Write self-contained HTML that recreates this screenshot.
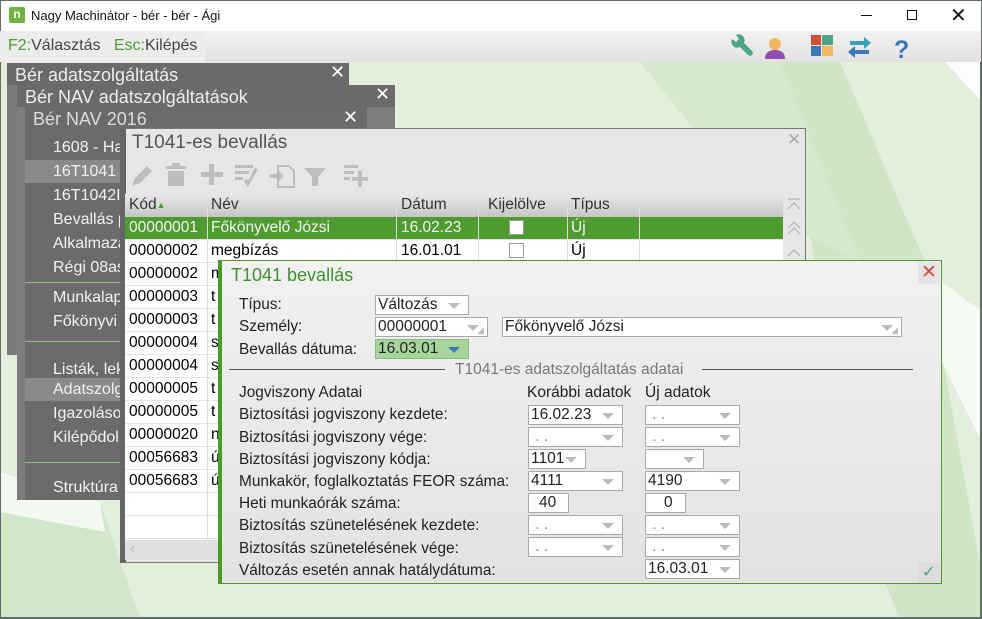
<!DOCTYPE html>
<html><head><meta charset="utf-8">
<style>
*{margin:0;padding:0;box-sizing:border-box}
body{width:982px;height:619px;overflow:hidden;font-family:"Liberation Sans",sans-serif;background:#e3efdc;position:relative}
.abs{position:absolute}
.t{position:absolute;white-space:nowrap}
.menu .t{color:#f2f2f2;font-size:16px;left:28px}
.inp{position:absolute;background:#fff;border:1px solid #a9a9a9;height:20px;font-size:15.5px;line-height:18px;padding-left:2px;color:#222}
.dd::after{content:"";position:absolute;right:8px;top:7px;border-left:6px solid transparent;border-right:6px solid transparent;border-top:6px solid #bbb}
.row{position:absolute;left:125px;width:658px;height:23px;border-bottom:1px solid #e3e3e3;font-size:15.5px;line-height:22px;background:#fff}
.row span{position:absolute;top:0}
.lab{position:absolute;left:239px;font-size:15.4px;color:#222}
</style></head><body>
<svg class="abs" style="left:0;top:62px" width="982" height="557">
<polygon points="700,0 840,0 925,200 990,557 900,557 860,460 780,0" fill="#cfe5c6"/>
<polygon points="640,0 700,0 780,0 860,200 760,150" fill="#d6e9ce"/>
<polygon points="945,0 982,0 982,40" fill="#fafdf9"/>
<polygon points="942,220 982,250 982,380 942,300" fill="#f7fbf5"/>
<polygon points="0,420 100,440 140,557 0,557" fill="#d2e7ca"/>
<polygon points="0,410 100,440 105,470 0,450" fill="#f3f9f0"/>
</svg>
<!-- title bar -->
<div class="abs" style="left:0;top:0;width:982px;height:31px;background:#fff;border:1px solid #5f6e6a;border-bottom:none"></div>
<div class="abs" style="left:9px;top:7px;width:16px;height:16px;background:#6db33f;border-radius:2px;color:#fff;font-size:12px;font-weight:bold;line-height:15px;text-align:center">n</div>
<div class="t" style="left:31px;top:8px;font-size:13px;color:#111">Nagy Machinátor - bér - bér - Ági</div>
<div class="abs" style="left:861px;top:15px;width:11px;height:1px;background:#111"></div>
<div class="abs" style="left:907px;top:10px;width:10px;height:10px;border:1px solid #111"></div>
<div class="t" style="left:950px;top:3px;font-size:20px;color:#111">✕</div>
<!-- toolbar -->
<div class="abs" style="left:0;top:31px;width:982px;height:31px;background:linear-gradient(#f2f2f2,#e2e2e2);border-left:1px solid #5f6e6a;border-right:1px solid #5f6e6a"></div>
<div class="abs" style="left:0;top:31px;width:205px;height:31px;background:#ececec"></div>
<div class="t" style="left:8px;top:37px;font-size:16px;color:#444"><span style="color:#4aa02c">F2:</span>Választás&nbsp;&nbsp; <span style="color:#4aa02c">Esc:</span>Kilépés</div>
<svg class="abs" style="left:722px;top:31px" width="202" height="31">
<path d="M10 8 a6 6 0 0 0 8 8 l8 8 a2.5 2.5 0 0 0 4 -4 l-8 -8 a6 6 0 0 0 -8 -8 l3 4 -3 3z" fill="#4ea585"/>
<circle cx="53" cy="13" r="6" fill="#f0b860"/><path d="M43 28 q0 -9 10 -9 q10 0 10 9z" fill="#8e4fae"/>
<rect x="89" y="4" width="10" height="10" fill="#d24e34"/><rect x="100" y="4" width="11" height="10" fill="#4ea585"/>
<rect x="89" y="15" width="10" height="10" fill="#3b78b8"/><rect x="100" y="15" width="11" height="10" fill="#f0b860"/>
<path d="M128 10 h14 v-4 l7 6 -7 6 v-4 h-14z" fill="#3aa0b8"/><path d="M147 19 h-14 v-4 l-7 6 7 6 v-4 h14z" fill="#3b78b8"/>
<text x="172" y="27" font-family="Liberation Sans" font-weight="bold" font-size="25" fill="#3b78b8">?</text>
</svg>
<!-- borders -->
<div class="abs" style="left:980px;top:62px;width:2px;height:557px;background:#5f6e6a"></div>
<div class="abs" style="left:0;top:62px;width:1px;height:557px;background:#5f6e6a"></div>
<div class="abs" style="left:0;top:617px;width:982px;height:2px;background:#5f6e6a"></div>
<!-- back windows -->
<div class="abs" style="left:7px;top:63px;width:342px;height:292px;background:#7a7a7a"></div>
<div class="abs" style="left:7px;top:63px;width:342px;height:22px;background:#6a6a6a"></div>
<div class="t" style="left:15px;top:65px;font-size:18px;color:#eee">Bér adatszolgáltatás</div>
<div class="t" style="left:330px;top:62px;font-size:18px;color:#fff">✕</div>
<div class="abs" style="left:17px;top:85px;width:378px;height:415px;background:#7d7d7d"></div>
<div class="abs" style="left:17px;top:85px;width:378px;height:22px;background:#6a6a6a"></div>
<div class="t" style="left:25px;top:87px;font-size:18px;color:#eee">Bér NAV adatszolgáltatások</div>
<div class="t" style="left:375px;top:84px;font-size:18px;color:#fff">✕</div>
<div class="abs menu" style="left:25px;top:107px;width:342px;height:393px;background:#6b6b6b">
<div class="t" style="left:8px;top:2px;font-size:18px;color:#ddd">Bér NAV 2016</div>
<div class="t" style="left:318px;top:0;font-size:18px;color:#fff">✕</div>
<div class="abs" style="left:0;top:53px;width:342px;height:23px;background:#8a8a8a"></div>
<div class="abs" style="left:0;top:271px;width:342px;height:23px;background:#8a8a8a"></div>
<div class="abs" style="left:0;top:175px;width:342px;height:1px;background:#8fbf7a"></div>
<div class="abs" style="left:0;top:234px;width:342px;height:1px;background:#8fbf7a"></div>
<div class="abs" style="left:0;top:355px;width:342px;height:1px;background:#8fbf7a"></div>
<div class="t" style="top:32px">1608 - Ha</div>
<div class="t" style="top:56px">16T1041</div>
<div class="t" style="top:80px">16T1042I</div>
<div class="t" style="top:104px">Bevallás p</div>
<div class="t" style="top:128px">Alkalmaza</div>
<div class="t" style="top:152px">Régi 08as</div>
<div class="t" style="top:182px">Munkalap</div>
<div class="t" style="top:206px">Főkönyvi</div>
<div class="t" style="top:254px">Listák, lek</div>
<div class="t" style="top:274px">Adatszolg</div>
<div class="t" style="top:298px">Igazoláso</div>
<div class="t" style="top:322px">Kilépődol</div>
<div class="t" style="top:372px">Struktúra</div>
</div>
<!-- T1041-es window -->
<div class="abs" style="left:120px;top:128px;width:686px;height:435px;background:#e6e6e6;border:1px solid #777;border-left:6px solid #666"></div>
<div class="t" style="left:132px;top:132px;font-size:19px;color:#555">T1041-es bevallás</div>
<div class="t" style="left:787px;top:130px;font-size:17px;color:#aaa">✕</div>
<svg class="abs" style="left:128px;top:160px" width="250" height="30" fill="#bdbdbd">
<path d="M4 26 l3 -8 12 -12 5 5 -12 12z"/>
<rect x="38" y="6" width="20" height="3"/><rect x="44" y="3" width="8" height="3"/><path d="M40 11 h16 v15 h-16z"/>
<rect x="73" y="12" width="22" height="5"/><rect x="81" y="4" width="5" height="21"/>
<rect x="107" y="5" width="18" height="3"/><rect x="107" y="11" width="14" height="3"/><rect x="107" y="17" width="8" height="3"/><path d="M116 22 l4 5 10 -18 -3 -1 -7 13 -2 -3z"/>
<path d="M150 6 h11 l5 5 v16 h-16z" fill="none" stroke="#bdbdbd" stroke-width="2"/><path d="M142 14 h8 v-4 l6 6 -6 6 v-4 h-8z"/>
<path d="M176 8 h22 l-8 9 v9 h-6 v-9z"/>
<rect x="216" y="5" width="14" height="3"/><rect x="216" y="11" width="10" height="3"/><rect x="216" y="17" width="6" height="3"/><rect x="224" y="17" width="16" height="4"/><rect x="230" y="11" width="4" height="16"/>
</svg>
<!-- table -->
<div class="abs" style="left:125px;top:194px;width:658px;height:23px;background:linear-gradient(#e8e8e8,#c6c6c6);font-size:15.5px;color:#333;line-height:22px">
<span class="t" style="left:4px">Kód<span style="color:#4aa02c;font-size:9px;vertical-align:top">▲</span></span>
<span class="t" style="left:86px">Név</span><span class="t" style="left:276px">Dátum</span><span class="t" style="left:363px">Kijelölve</span><span class="t" style="left:446px">Típus</span>
</div>
<div class="abs" style="left:125px;top:217px;width:658px;height:323px;background:#fff"></div>
<div class="row" style="top:217px;background:#4f9b2f;color:#f4f4f4"><span style="left:4px">00000001</span><span style="left:86px">Főkönyvelő Józsi</span><span style="left:276px">16.02.23</span><span style="left:446px">Új</span><span style="left:384px;top:3px;width:15px;height:15px;background:#fff;border:1px solid #999"></span></div>
<div class="row" style="top:240px"><span style="left:4px">00000002</span><span style="left:86px">megbízás</span><span style="left:276px">16.01.01</span><span style="left:446px">Új</span><span style="left:384px;top:3px;width:15px;height:15px;background:#fff;border:1px solid #999"></span></div>
<div class="row" style="top:263px"><span style="left:4px">00000002</span><span style="left:86px">m</span></div>
<div class="row" style="top:286px"><span style="left:4px">00000003</span><span style="left:86px">t</span></div>
<div class="row" style="top:309px"><span style="left:4px">00000003</span><span style="left:86px">t</span></div>
<div class="row" style="top:332px"><span style="left:4px">00000004</span><span style="left:86px">s</span></div>
<div class="row" style="top:355px"><span style="left:4px">00000004</span><span style="left:86px">s</span></div>
<div class="row" style="top:378px"><span style="left:4px">00000005</span><span style="left:86px">t</span></div>
<div class="row" style="top:401px"><span style="left:4px">00000005</span><span style="left:86px">t</span></div>
<div class="row" style="top:424px"><span style="left:4px">00000020</span><span style="left:86px">n</span></div>
<div class="row" style="top:447px"><span style="left:4px">00056683</span><span style="left:86px">ú</span></div>
<div class="row" style="top:470px"><span style="left:4px">00056683</span><span style="left:86px">ú</span></div>
<div class="row" style="top:493px"></div>
<div class="row" style="top:516px"></div>
<div class="abs" style="left:207px;top:194px;width:1px;height:346px;background:#ddd"></div>
<div class="abs" style="left:396px;top:194px;width:1px;height:70px;background:#ddd"></div>
<div class="abs" style="left:478px;top:194px;width:1px;height:70px;background:#ddd"></div>
<div class="abs" style="left:567px;top:194px;width:1px;height:70px;background:#ddd"></div>
<div class="abs" style="left:639px;top:194px;width:1px;height:70px;background:#ddd"></div>
<div class="abs" style="left:125px;top:540px;width:658px;height:20px;background:#e0e0e0"></div>
<div class="t" style="left:130px;top:540px;font-size:16px;color:#bbb">‹</div>
<svg class="abs" style="left:785px;top:196px" width="20" height="66" fill="none" stroke="#bbb" stroke-width="1.5">
<path d="M3 3 h12 M3 13 l6 -6 6 6"/><path d="M3 32 l6 -6 6 6 M3 38 l6 -6 6 6"/><path d="M3 60 l6 -6 6 6"/>
</svg>
<!-- dialog -->
<div class="abs" style="left:218px;top:260px;width:724px;height:324px;background:linear-gradient(#f1f1f1,#e2e2e2);border:1px solid #4a9a2a;border-left:4px solid #4a9a2a"></div>
<div class="t" style="left:231px;top:265px;font-size:18px;color:#3f8f2a">T1041 bevallás</div>
<div class="abs" style="left:918px;top:262px;width:22px;height:22px;background:#e4e4e4"></div>
<div class="t" style="left:921px;top:261px;font-size:19px;color:#d24e34">✕</div>
<div class="abs" style="left:918px;top:562px;width:22px;height:21px;background:#dcdcdc"></div>
<div class="t" style="left:922px;top:562px;font-size:16px;color:#4ea585">✓</div>
<div class="lab" style="top:296px">Típus:</div>
<div class="lab" style="top:318px">Személy:</div>
<div class="lab" style="top:341px">Bevallás dátuma:</div>
<div class="inp dd" style="left:375px;top:295px;width:94px">Változás</div>
<div class="inp dd" style="left:375px;top:317px;width:113px">00000001<span style="position:absolute;right:3px;top:3px;font-size:9px;color:#bbb">◢</span></div>
<div class="inp dd" style="left:502px;top:317px;width:400px">Főkönyvelő Józsi<span style="position:absolute;right:3px;top:3px;font-size:9px;color:#bbb">◢</span></div>
<div class="inp" style="left:375px;top:339px;width:94px;background:#a6d49a;border-color:#8ab87f">16.03.01<span style="position:absolute;right:8px;top:7px;border-left:6px solid transparent;border-right:6px solid transparent;border-top:6px solid #3b78b8"></span></div>
<div class="abs" style="left:229px;top:369px;width:216px;height:1px;background:#555"></div>
<div class="t" style="left:455px;top:361px;font-size:15.5px;color:#777">T1041-es adatszolgáltatás adatai</div>
<div class="abs" style="left:702px;top:369px;width:211px;height:1px;background:#555"></div>
<div class="lab" style="top:384px">Jogviszony Adatai</div>
<div class="t" style="left:527px;top:384px;font-size:15.5px;color:#222">Korábbi adatok</div>
<div class="t" style="left:645px;top:384px;font-size:15.5px;color:#222">Új adatok</div>
<div class="lab" style="top:406px">Biztosítási jogviszony kezdete:</div>
<div class="lab" style="top:429px">Biztosítási jogviszony vége:</div>
<div class="lab" style="top:451px">Biztosítási jogviszony kódja:</div>
<div class="lab" style="top:473px">Munkakör, foglalkoztatás FEOR száma:</div>
<div class="lab" style="top:495px">Heti munkaórák száma:</div>
<div class="lab" style="top:517px">Biztosítás szünetelésének kezdete:</div>
<div class="lab" style="top:540px">Biztosítás szünetelésének vége:</div>
<div class="lab" style="top:562px">Változás esetén annak hatálydátuma:</div>
<div class="inp dd" style="left:528px;top:405px;width:95px">16.02.23</div>
<div class="inp dd" style="left:645px;top:405px;width:95px;color:#888">&nbsp;. .</div>
<div class="inp dd" style="left:528px;top:427px;width:95px;color:#888">&nbsp;. .</div>
<div class="inp dd" style="left:645px;top:427px;width:95px;color:#888">&nbsp;. .</div>
<div class="inp dd" style="left:528px;top:449px;width:58px">1101</div>
<div class="inp dd" style="left:645px;top:449px;width:59px"></div>
<div class="inp dd" style="left:528px;top:471px;width:95px">4111</div>
<div class="inp dd" style="left:645px;top:471px;width:95px">4190</div>
<div class="inp" style="left:528px;top:493px;width:41px;padding-left:10px">40</div>
<div class="inp" style="left:645px;top:493px;width:41px;padding-left:18px">0</div>
<div class="inp dd" style="left:528px;top:515px;width:95px;color:#888">&nbsp;. .</div>
<div class="inp dd" style="left:645px;top:515px;width:95px;color:#888">&nbsp;. .</div>
<div class="inp dd" style="left:528px;top:537px;width:95px;color:#888">&nbsp;. .</div>
<div class="inp dd" style="left:645px;top:537px;width:95px;color:#888">&nbsp;. .</div>
<div class="inp dd" style="left:645px;top:559px;width:95px">16.03.01</div>
</body></html>
